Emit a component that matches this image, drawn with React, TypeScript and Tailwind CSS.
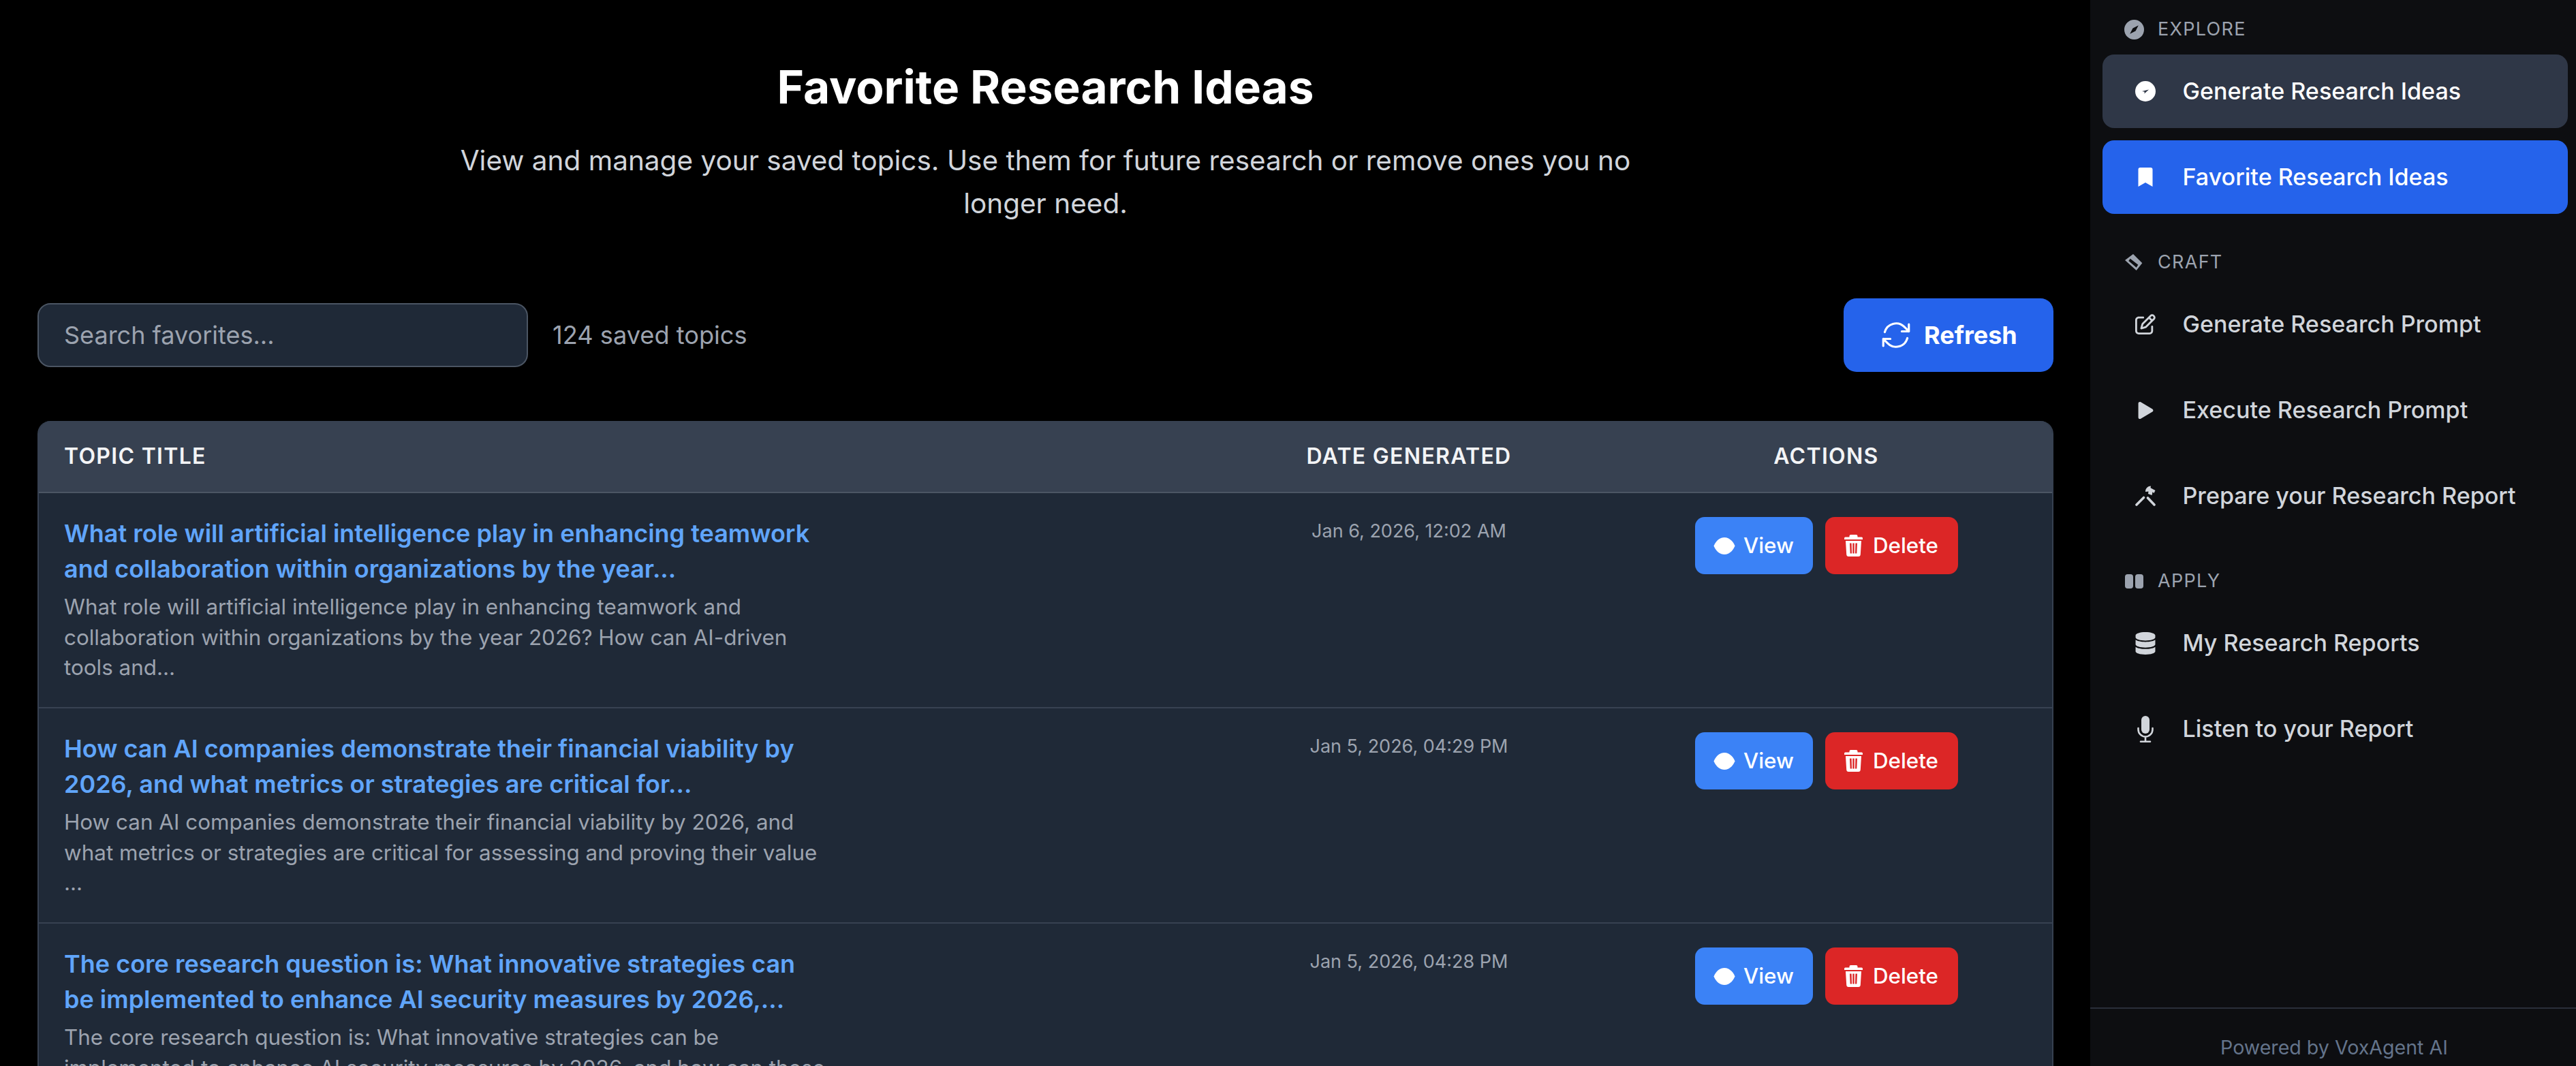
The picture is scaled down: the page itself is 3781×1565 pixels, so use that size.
import { FaBookmark, FaDatabase, FaPlay } from 'react-icons/fa';
import { FaRegPenToSquare } from 'react-icons/fa6';
import type { ReactNode } from 'react';

const rows = [
    {
        title: 'What role will artificial intelligence play in enhancing teamwork and collaboration within organizations by the year...',
        body: 'What role will artificial intelligence play in enhancing teamwork and collaboration within organizations by the year 2026? How can AI-driven tools and...',
        date: 'Jan 6, 2026, 12:02 AM',
    },
    {
        title: 'How can AI companies demonstrate their financial viability by 2026, and what metrics or strategies are critical for...',
        body: 'How can AI companies demonstrate their financial viability by 2026, and what metrics or strategies are critical for assessing and proving their value ...',
        date: 'Jan 5, 2026, 04:29 PM',
    },
    {
        title: 'The core research question is: What innovative strategies can be implemented to enhance AI security measures by 2026,...',
        body: 'The core research question is: What innovative strategies can be implemented to enhance AI security measures by 2026, and how can these measures...',
        date: 'Jan 5, 2026, 04:28 PM',
    },
];

// compass with a thin needle, used in the section label
function CompassIcon() {
    return (
        <svg viewBox="0 0 24 24" className="h-[29px] w-[29px]" fill="currentColor">
            <path fillRule="evenodd" d="M12 0a12 12 0 1 0 0 24a12 12 0 0 0 0-24ZM17.2 6.8L13.7 13.7L6.8 17.2L10.3 10.3Z" />
        </svg>
    );
}

// same circle but the needle is small and off to the side
function SmallCompassIcon() {
    return (
        <svg viewBox="0 0 24 24" className="h-[30px] w-[30px]" fill="currentColor">
            <path fillRule="evenodd" d="M12 0a12 12 0 1 0 0 24a12 12 0 0 0 0-24ZM16 9.9L8 12L11 12.6L10.7 14.7Z" />
        </svg>
    );
}

function CraftIcon() {
    return (
        <svg viewBox="0 0 26 24" className="h-[24px] w-[26px]" fill="currentColor">
            <path fillRule="evenodd" d="M12 0L25.3 13.3L16.7 24L0 9ZM5.3 10L16.7 19.7L19.3 15.7L7.7 6.7Z" />
        </svg>
    );
}

function ApplyIcon() {
    return (
        <svg viewBox="0 0 27 21" className="h-[21px] w-[27px]" fill="currentColor">
            <rect x="0" y="0" width="12" height="21" rx="4" />
            <rect x="15" y="0" width="12" height="21" rx="4" />
        </svg>
    );
}

function ToolsIcon() {
    return (
        <svg viewBox="0 0 30 30" className="h-[30px] w-[30px]" fill="currentColor">
            <path d="M2 28L12.5 17.5M28 28L18.5 18" stroke="currentColor" strokeWidth="3.6" strokeLinecap="round" />
            <path d="M15 9C15 3.500 19 0.500 23 0.500L22.500 3.200L29.500 7L27.500 11L25.500 9.200L24.500 14L19 12L19.500 8.500Z" />
        </svg>
    );
}

function MicIcon() {
    return (
        <svg viewBox="0 0 24 39" className="h-[39px] w-[24px]" fill="none" stroke="currentColor" strokeWidth="2.6" strokeLinecap="round">
            <rect x="6" y="0" width="12" height="26" rx="6" fill="currentColor" stroke="none" />
            <path d="M1.500 18V20A10.500 10.500 0 0 0 22.500 20V18M12 31V37.500M5 37.700H19" />
        </svg>
    );
}

function RefreshIcon() {
    return (
        <svg viewBox="0 0 24 24" className="h-[50px] w-[50px]" fill="none" stroke="currentColor" strokeWidth="1.5" strokeLinecap="round" strokeLinejoin="round">
            <path d="M16.023 9.348h4.992v-.001M2.985 19.644v-4.992m0 0h4.992m-4.993 0 3.181 3.183a8.25 8.25 0 0 0 13.803-3.7M4.031 9.865a8.25 8.25 0 0 1 13.803-3.7l3.181 3.182m0-4.991v4.99" />
        </svg>
    );
}

function EyeIcon() {
    return (
        <svg viewBox="0 0 32 25" className="h-[25px] w-[32px]" fill="currentColor">
            <path d="M0.500 12.500C4 4 10 0 16 0C22 0 28 4 31.500 12.500C28 21 22 25 16 25C10 25 4 21 0.500 12.500Z" />
        </svg>
    );
}

function TrashIcon() {
    return (
        <svg viewBox="0 0 27 32" className="h-[32px] w-[27px]" fill="currentColor">
            <path d="M9.500 0H17.500Q19.500 0 19.500 2V3.500H25.500Q27 3.500 27 5V7H0V5Q0 3.500 1.500 3.500H7.500V2Q7.500 0 9.500 0Z" />
            <path fillRule="evenodd" d="M2 9H25L23.800 29Q23.600 32 20.800 32H6.200Q3.400 32 3.200 29ZM8 12.500L8.700 27.500H11L10.600 12.500ZM12.300 12.500V27.500H14.700V12.500ZM16.400 12.500L16 27.500H18.300L19 12.500Z" />
        </svg>
    );
}

function SectionLabel({ icon, label }: { icon: ReactNode; label: string }) {
    return (
        <div className="flex h-[40px] items-center gap-[20px] pl-[31px] text-[27px] tracking-[1.3px] text-[#9ca3af] uppercase">
            <span className="flex w-[30px] shrink-0 justify-center">{icon}</span>
            {label}
        </div>
    );
}

function NavItem({ icon, label, className }: { icon: ReactNode; label: string; className?: string }) {
    return (
        <a className={`flex h-[108px] items-center gap-[39.500px] rounded-[17px] pl-[48px] text-[34.1px] font-medium ${className ?? 'text-[#d1d5db]'}`}>
            <span className="flex w-[30px] shrink-0 justify-center">{icon}</span>
            {label}
        </a>
    );
}

function Row({ title, body, date }: { title: string; body: string; date: string }) {
    return (
        <div className="flex h-[316px] border-b-2 border-[#374151] pt-[34px] pl-[37px]">
            <div className="w-[1693px] shrink-0">
                <div className="w-[1125px]">
                    <div className="text-[36px] leading-[51.500px] font-semibold text-[#60a5fa]">{title}</div>
                    <div className="mt-[8px] text-[31.4px] leading-[44.5px] text-[#9ca3af]">{body}</div>
                </div>
            </div>
            <div className="w-[562px] shrink-0 pt-[2px] text-center text-[27px] text-[#9ca3af]">{date}</div>
            <div className="mt-[1px] flex flex-1 justify-center gap-[18px]">
                <button className="flex h-[84px] w-[173px] items-center justify-center gap-[12px] rounded-[14px] bg-[#3b82f6] text-[31.3px] font-medium text-white">
                    <EyeIcon /> View
                </button>
                <button className="flex h-[84px] w-[195px] items-center justify-center gap-[15px] rounded-[14px] bg-[#dc2626] text-[31.3px] font-medium text-white">
                    <TrashIcon /> Delete
                </button>
            </div>
        </div>
    );
}

export default function App() {
    return (
        <div className="flex h-screen overflow-hidden bg-black font-['Inter',sans-serif]">
            <main className="min-w-0 flex-1 pt-[90px] pr-[54px] pl-[55px]">
                <h1 className="text-center text-[67.500px] leading-[76px] font-bold text-white">Favorite Research Ideas</h1>
                <p className="mx-auto mt-[38px] w-[1760px] text-center text-[40.500px] leading-[63px] text-[#d1d5db]">
                    View and manage your saved topics. Use them for future research or remove ones you no longer need.
                </p>
                <div className="mt-[108px] flex h-[108px] items-center">
                    <input
                        placeholder="Search favorites..."
                        className="h-[94px] w-[720px] rounded-[19px] border-2 border-[#4b5563] bg-[#1f2937] px-[37px] text-[36px] text-white outline-none placeholder:text-[#9ca3af]"
                    />
                    <span className="ml-[36px] text-[36.200px] text-[#9ca3af]">124 saved topics</span>
                    <button className="ml-auto flex h-[108px] w-[308px] items-center gap-[16px] rounded-[19px] bg-[#2563eb] pl-[52px] text-[36px] font-bold text-white">
                        <RefreshIcon /> Refresh
                    </button>
                </div>
                <div className="mt-[72px] overflow-hidden rounded-t-[19px] border-x-2 border-[#374151] bg-[#1f2937]">
                    <div className="flex h-[106px] items-center border-b-2 border-[#4b5563] bg-[#374151] pl-[37px] text-[32px] font-semibold tracking-[1.3px] text-[#f3f4f6] uppercase">
                        <div className="w-[1693px] shrink-0">Topic Title</div>
                        <div className="w-[562px] shrink-0 text-center">Date Generated</div>
                        <div className="flex-1 text-center">Actions</div>
                    </div>
                    {rows.map(r => <Row key={r.date} {...r} />)}
                </div>
            </main>
            <aside className="flex w-[713px] shrink-0 flex-col bg-[#0d0e11]">
                <nav className="flex-1 pt-[23px] pr-[12px] pl-[18px]">
                    <SectionLabel icon={<CompassIcon />} label="Explore" />
                    <div className="mt-[17px] flex flex-col gap-[18px]">
                        <NavItem icon={<SmallCompassIcon />} label="Generate Research Ideas" className="bg-[#2f3747] text-white" />
                        <NavItem icon={<FaBookmark size={28} />} label="Favorite Research Ideas" className="bg-[#2563eb] text-white" />
                    </div>
                    <div className="mt-[51px]"><SectionLabel icon={<CraftIcon />} label="Craft" /></div>
                    <div className="mt-[17px] flex flex-col gap-[18px]">
                        <NavItem icon={<FaRegPenToSquare size={34} />} label="Generate Research Prompt" />
                        <NavItem icon={<FaPlay size={25} />} label="Execute Research Prompt" />
                        <NavItem icon={<ToolsIcon />} label="Prepare your Research Report" />
                    </div>
                    <div className="mt-[51px]"><SectionLabel icon={<ApplyIcon />} label="Apply" /></div>
                    <div className="mt-[17px] flex flex-col gap-[18px]">
                        <NavItem icon={<FaDatabase size={33} />} label="My Research Reports" />
                        <NavItem icon={<MicIcon />} label="Listen to your Report" />
                    </div>
                </nav>
                <div className="h-[86px] border-t-2 border-[#2a2f3a] pt-[36px] pl-[3px] text-center text-[28.600px] text-[#64748b]">Powered by VoxAgent AI</div>
            </aside>
        </div>
    );
}
